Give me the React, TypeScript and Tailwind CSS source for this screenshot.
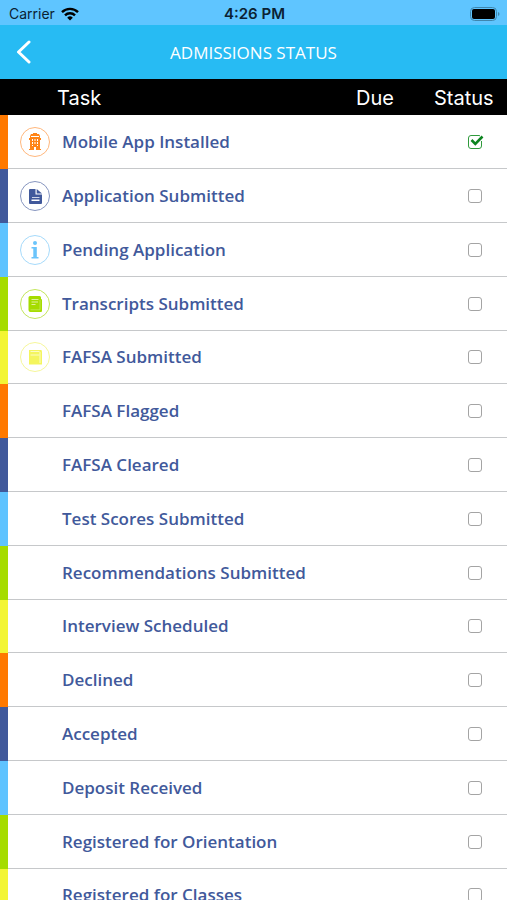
import React from 'react';

type Tone = 'orange' | 'navy' | 'sky' | 'lime' | 'yellow';

interface Task {
  name: string;
  tone: Tone;
  icon?: React.ReactNode;
  done?: boolean;
}

const barColors: Record<Tone, string> = {
  orange: 'bg-[#ff7900]',
  navy: 'bg-[#41599b]',
  sky: 'bg-[#5fc3ff]',
  lime: 'bg-[#a5dc00]',
  yellow: 'bg-[#f3f534]',
};

const iconColors: Record<Tone, string> = {
  orange: 'text-[#ff8417] border-[#ffb77c]',
  navy: 'text-[#41599b] border-[#8796c0]',
  sky: 'text-[#6ac4fb] border-[#a5dafb]',
  lime: 'text-[#a5dc00] border-[#c3e65c]',
  yellow: 'text-[#f4f55e] border-[#f6f79a]',
};

const BuildingIcon = () => (
  <svg viewBox="0 0 18 18" className="w-[18px] h-[18px]" fill="currentColor" aria-hidden="true">
    <path
      fillRule="evenodd"
      d="M7 0h4v1h2l1 2v2h1v2h-1v9h1v1h-5v-3H8v3H3v-1h1V7H3V5h1V3l1-2h2zM6 6v2h1V6zM8.500 6v2h1V6zM11 6v2h1V6zM6 9v2h1V9zM8.500 9v2h1V9zM11 9v2h1V9zM6 12v1h1v-1zM11 12v1h1v-1zM5 4h8V3H5z"
    />
  </svg>
);

const DocumentIcon = () => (
  <svg viewBox="0 0 18 18" className="w-[18px] h-[18px]" fill="currentColor" aria-hidden="true">
    <path fillRule="evenodd" d="M4 2h5.500v5.500H16V16a1 1 0 0 1-1 1H4a1 1 0 0 1-1-1V3a1 1 0 0 1 1-1zM6 10v.8h7.500V10zM5.500 12.500V14h8v-1.500z" />
    <path d="M10.700 2l5.300 4.500h-5.300z" />
  </svg>
);

const InfoIcon = () => (
  <svg viewBox="0 0 18 18" className="w-[18px] h-[18px]" fill="currentColor" aria-hidden="true">
    <circle cx="9" cy="2" r="2" />
    <path d="M5.500 6h5.300v10h1.700v1.500h-7V16h1.800V7.500H5.500z" />
  </svg>
);

const BookIcon = () => (
  <svg viewBox="0 0 18 18" className="w-[18px] h-[18px]" aria-hidden="true">
    <path fill="currentColor" d="M4 1h9.500A1.500 1.500 0 0 1 15 2.500V4l1 .5V16a1 1 0 0 1-1 1H4.500A2 2 0 0 1 2.500 15V2.500A1.500 1.500 0 0 1 4 1z" />
    <path fill="none" stroke="#dff29c" d="M5.500 4.500h7M5.500 7h6.500M5.500 9.500h4" />
    <path fill="none" stroke="#c9ea66" strokeWidth="0.700" d="M4.500 14.800h9.500V5" />
  </svg>
);

const FormIcon = () => (
  <svg viewBox="0 0 18 18" className="w-[18px] h-[18px]" aria-hidden="true">
    <path fill="currentColor" d="M3 2h12.500l.5 2v12.500H3z" />
    <path fill="none" stroke="#fbfcc4" d="M4.500 3.500h9M4.500 7h9M14 4v11" />
  </svg>
);

const tasks: Task[] = [
  { name: 'Mobile App Installed', tone: 'orange', icon: <BuildingIcon />, done: true },
  { name: 'Application Submitted', tone: 'navy', icon: <DocumentIcon /> },
  { name: 'Pending Application', tone: 'sky', icon: <InfoIcon /> },
  { name: 'Transcripts Submitted', tone: 'lime', icon: <BookIcon /> },
  { name: 'FAFSA Submitted', tone: 'yellow', icon: <FormIcon /> },
  { name: 'FAFSA Flagged', tone: 'orange' },
  { name: 'FAFSA Cleared', tone: 'navy' },
  { name: 'Test Scores Submitted', tone: 'sky' },
  { name: 'Recommendations Submitted', tone: 'lime' },
  { name: 'Interview Scheduled', tone: 'yellow' },
  { name: 'Declined', tone: 'orange' },
  { name: 'Accepted', tone: 'navy' },
  { name: 'Deposit Received', tone: 'sky' },
  { name: 'Registered for Orientation', tone: 'lime' },
  { name: 'Registered for Classes', tone: 'yellow' },
];

const StatusBar = () => (
  <div className="grid grid-cols-3 items-center h-[25px] pt-[3px] pl-[9px] pr-[7px] bg-[#5fc5ff] text-[#0b2233] font-['Inter',sans-serif] text-[14px] leading-[20px]">
    <div className="flex items-center gap-[6px]">
      <span>Carrier</span>
      <svg viewBox="0 0 18 14" className="w-[18px] h-[14px]" fill="none" stroke="#000" strokeWidth="2.400" aria-hidden="true">
        <path d="M1 5.200a11.300 11.300 0 0 1 16 0" />
        <path d="M4 8.300a7 7 0 0 1 10 0" />
        <path d="M9 13.500L6.200 10.700a4 4 0 0 1 5.600 0z" fill="#000" stroke="none" />
      </svg>
    </div>
    <span className="text-center text-[15px] font-semibold">4:26 PM</span>
    <svg viewBox="0 0 30 14" className="w-[30px] h-[14px] justify-self-end" aria-hidden="true">
      <rect x="0.500" y="0.500" width="26" height="13" rx="4" fill="none" stroke="#3f86ae" />
      <rect x="2" y="2" width="23" height="10" rx="2" fill="#000" />
      <path d="M28 5v4c2-.8 2-3.200 0-4z" fill="#3f86ae" />
    </svg>
  </div>
);

const TaskRow: React.FC<{ task: Task }> = ({ task }) => (
  <tr className="h-[54px] nth-[5n]:h-[53px]">
    <td className={`p-0 ${barColors[task.tone]}`} />
    <td className="p-0 pl-3 border-b border-[#c6c8ca]">
      {task.icon && (
        <span className={`flex items-center justify-center w-[30px] h-[30px] rounded-full border ${iconColors[task.tone]}`}>
          {task.icon}
        </span>
      )}
    </td>
    <td className="p-0 border-b border-[#c6c8ca] font-['Open_Sans',sans-serif] font-semibold text-[17px] leading-[24px] text-[#41599b]">
      {task.name}
    </td>
    <td className="p-0 border-b border-[#c6c8ca]" />
    <td className="p-0 border-b border-[#c6c8ca]">
      <div className="relative w-[14px] h-[14px] ml-[34px]">
        <input
          type="checkbox"
          defaultChecked={task.done}
          aria-label={task.name}
          className="peer block w-[14px] h-[14px] appearance-none rounded-[3px] border border-[#a4a4a4] checked:border-[#2f9a3c]"
        />
        <svg
          viewBox="0 0 16 14"
          className="hidden peer-checked:block absolute left-0 top-0 w-[16px] h-[14px] pointer-events-none"
          fill="none"
          aria-hidden="true"
        >
          <path d="M12 0h3v6h-3z" fill="#fff" />
          <path d="M3.500 5L7.300 8.800L14.500 1.500" stroke="#0d8420" strokeWidth="2.600" />
        </svg>
      </div>
    </td>
  </tr>
);

const App: React.FC = () => {
  return (
    <div className="h-screen flex flex-col overflow-hidden bg-white">
      <StatusBar />

      <header className="grid grid-cols-[48px_1fr_48px] items-center h-[54px] bg-[#27bbf3]">
        <button type="button" aria-label="Back" className="flex items-center h-full pl-4">
          <svg viewBox="0 0 16 24" className="w-[16px] h-[24px]" fill="none" stroke="#fff" strokeWidth="3" strokeLinecap="round" strokeLinejoin="round" aria-hidden="true">
            <path d="M13 2L2.500 12L13 22" />
          </svg>
        </button>
        <h1 className="pt-[2px] text-center text-white font-['Open_Sans',sans-serif] text-[17px] leading-[24px]">ADMISSIONS STATUS</h1>
      </header>

      <main className="flex-1 min-h-0 overflow-y-auto [scrollbar-width:none]">
        <table className="w-full table-fixed border-separate border-spacing-0">
          <colgroup>
            <col className="w-[8px]" />
            <col className="w-[54px]" />
            <col />
            <col className="w-[78px]" />
            <col className="w-[73px]" />
          </colgroup>
          <thead>
            <tr className="h-[36px] bg-black text-white font-['Inter',sans-serif] text-[20px] leading-[28px]">
              <th className="p-0 pt-[2px] pl-[57px] text-left font-normal" colSpan={3}>Task</th>
              <th className="p-0 pt-[2px] text-left font-normal">Due</th>
              <th className="p-0 pt-[2px] text-left font-normal">Status</th>
            </tr>
          </thead>
          <tbody>
            {tasks.map((task) => (
              <TaskRow key={task.name} task={task} />
            ))}
          </tbody>
        </table>
      </main>
    </div>
  );
};

export default App;
